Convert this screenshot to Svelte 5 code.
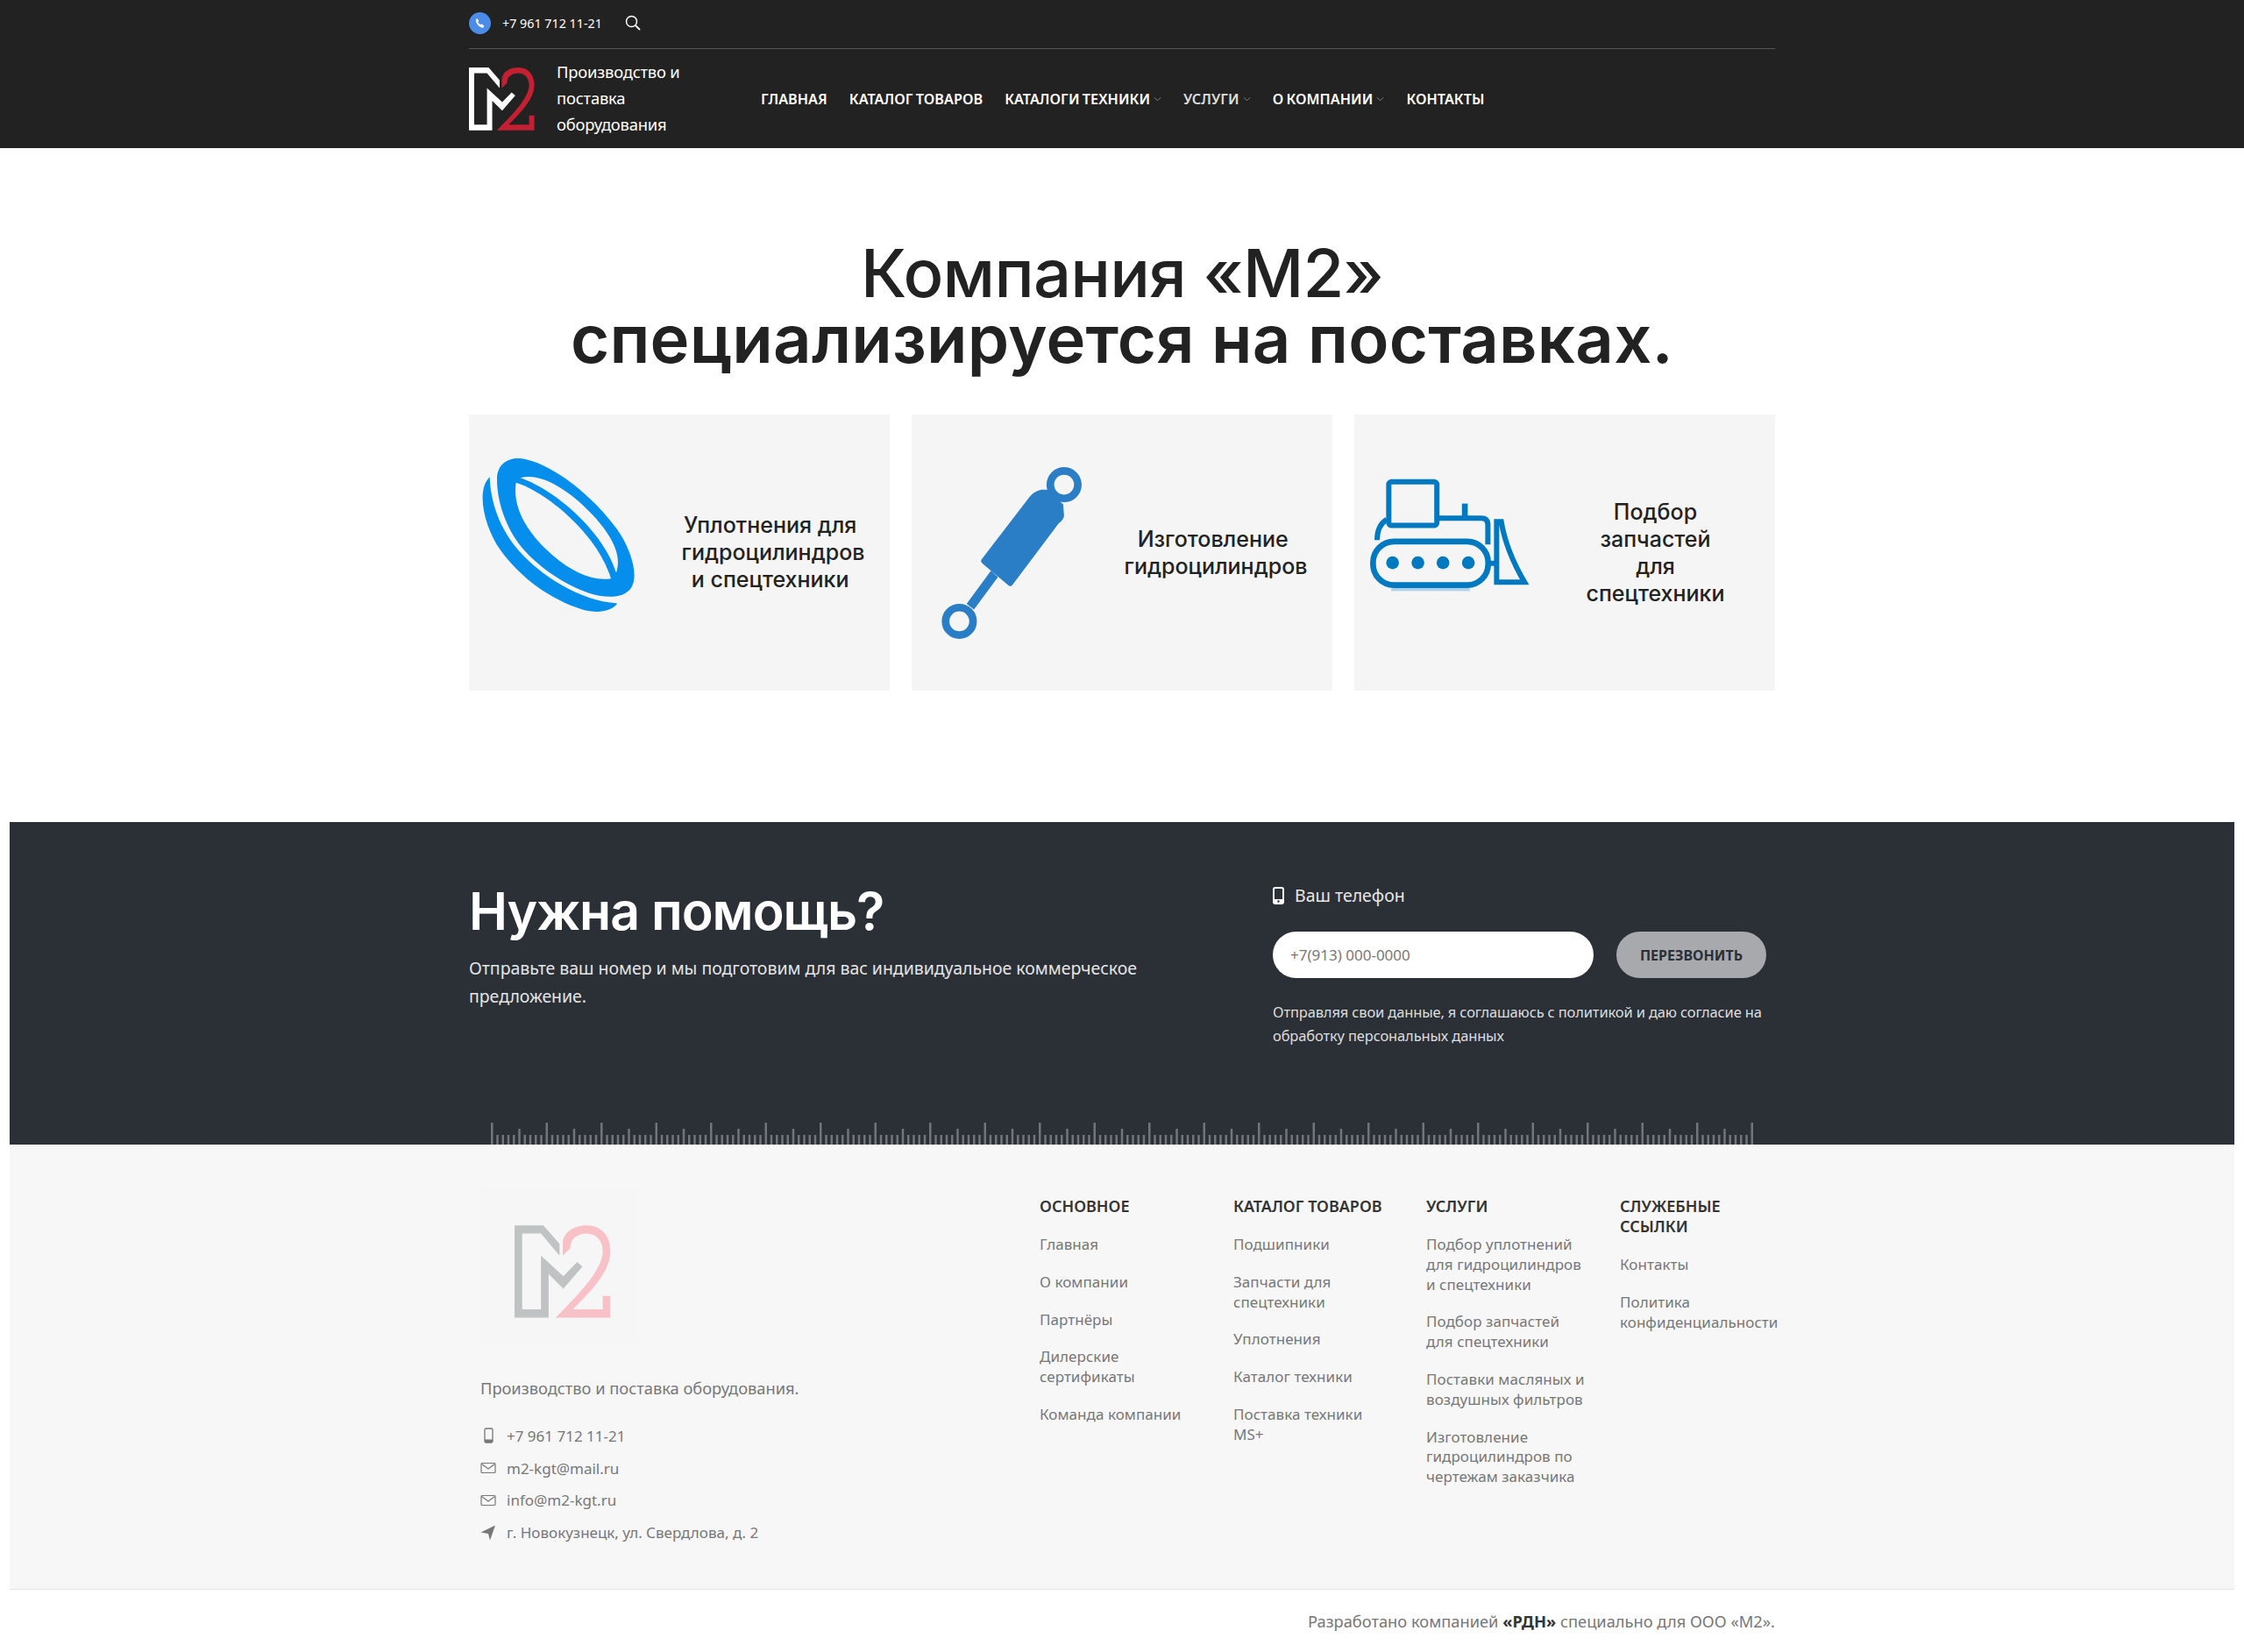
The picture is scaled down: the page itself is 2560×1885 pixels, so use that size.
<script>
  const nav = [
    { t: 'Главная' }, { t: 'Каталог товаров' }, { t: 'Каталоги техники', c: true },
    { t: 'Услуги', c: true, dim: true }, { t: 'О компании', c: true }, { t: 'Контакты' }
  ];
  const ticks = Array.from({ length: 231 }, (_, i) => ({
    x: i * 6.25 + 1,
    h: i % 10 === 0 ? 25 : i % 5 === 0 ? 18 : 11
  }));
  const cols = [
    { title: 'Основное', items: ['Главная', 'О компании', 'Партнёры', 'Дилерские\nсертификаты', 'Команда компании'] },
    { title: 'Каталог товаров', items: ['Подшипники', 'Запчасти для\nспецтехники', 'Уплотнения', 'Каталог техники', 'Поставка техники\nMS+'] },
    { title: 'Услуги', items: ['Подбор уплотнений\nдля гидроцилиндров\nи спецтехники', 'Подбор запчастей\nдля спецтехники', 'Поставки масляных и\nвоздушных фильтров', 'Изготовление\nгидроцилиндров по\nчертежам заказчика'] },
    { title: 'Служебные\nссылки', items: ['Контакты', 'Политика\nконфиденциальности'] }
  ];
  const mPath = 'M142 412H240L295 475V515L232 440H168V698H232V515L308 585L355 537L373 552L308 628L258 578V726H142Z';
  const twoPath = 'M306 515V470C310 430 350 412 388 412C440 412 468 450 468 500C468 560 420 620 340 698H442V652H468V726H282C340 665 442 570 442 500C442 465 420 440 388 440C355 440 330 460 332 490Z';
</script>

<header class="head">
  <div class="wrap">
    <div class="top">
      <span class="phone-dot">
        <svg viewBox="0 0 24 24" width="15" height="15"><path fill="#fff" d="M7 3l3 4.5-1.6 2.2c.9 2 2.6 4 4.6 5l2.2-1.6L20 17l-1.5 2.6c-.4.6-1.100.9-1.800.7C10.500 18.700 5.300 13.300 4.400 6.800 4.300 6.100 4.600 5.400 5.200 5z"/></svg>
      </span>
      <span class="top-phone">+7 961 712 11-21</span>
      <svg class="search" viewBox="0 0 18 18" width="18" height="18"><circle cx="7.500" cy="7.500" r="6" fill="none" stroke="#fff" stroke-width="1.500"/><path d="M12 12l5 5" stroke="#fff" stroke-width="1.800"/></svg>
    </div>
    <div class="main">
      <div class="brand">
        <svg class="logo" viewBox="142 412 328 315"><path d={mPath} fill="#fff"/><path d={twoPath} fill="#c32033"/></svg>
        <div class="tag">Производство и<br>поставка<br>оборудования</div>
      </div>
      <nav class="nav">
        {#each nav as n}
          <a href="#top" class:dim={n.dim}>{n.t}{#if n.c}<svg viewBox="0 0 10 6" width="9" height="6"><path d="M1 1l4 4 4-4" fill="none" stroke="#8a8a8a" stroke-width="1"/></svg>{/if}</a>
        {/each}
      </nav>
    </div>
  </div>
</header>

<section class="hero wrap">
  <h1>Компания «М2»<br><span>специализируется на поставках.</span></h1>
  <div class="cards">
    <div class="card">
      <div class="icon">
        <svg class="ring" viewBox="80 180 540 545">
          <path fill="#058eeb" d="M140 260C140 200 190 180 240 192C340 215 470 320 550 430C600 500 625 590 600 630C575 670 510 668 450 648C370 620 290 565 235 505C180 445 140 350 140 260Z"/>
          <path fill="#f5f5f5" d="M205 272C300 300 480 440 530 600C470 610 400 580 330 520C260 460 190 370 205 272Z"/>
          <path fill="#f5f5f5" d="M220 255C300 235 400 310 470 385C530 450 570 520 548 580C510 450 350 300 220 255Z"/>
          <path fill="#058eeb" d="M115 252C118 340 150 430 215 505C290 590 420 675 552 685C530 715 480 720 430 705C330 675 220 600 150 500C100 430 65 300 115 252Z"/>
        </svg>
      </div>
      <div class="ctext">Уплотнения для&nbsp;<br>гидроцилиндров<br>и спецтехники&nbsp;</div>
    </div>
    <div class="card">
      <div class="icon">
        <svg class="cyl" viewBox="120 200 500 620">
          <g fill="#2a7ec6">
            <path d="M265 535L430 320Q445 300 470 295L490 295L545 345L548 385Q545 400 530 410L372 620Q366 628 358 622L270 548Q262 542 265 535Z"/>
            <path d="M298 572L322 594L240 705L215 685Z"/>
          </g>
          <circle cx="548" cy="278" r="47" fill="none" stroke="#2a7ec6" stroke-width="26"/>
          <circle cx="190" cy="745" r="47" fill="none" stroke="#2a7ec6" stroke-width="26"/>
        </svg>
      </div>
      <div class="ctext">Изготовление&nbsp;<br>гидроцилиндров</div>
    </div>
    <div class="card">
      <div class="icon">
        <svg class="doz" viewBox="60 130 560 400">
          <g fill="none" stroke="#0079c1">
            <rect x="132" y="150" width="165" height="150" rx="10" stroke-width="18"/>
            <path d="M125 280C100 295 92 320 92 350" stroke-width="18"/>
            <path d="M300 275H450Q470 275 472 295V365" stroke-width="18"/>
            <path d="M393 225V275" stroke-width="20"/>
            <rect x="78" y="355" width="395" height="150" rx="72" stroke-width="20"/>
            <path d="M475 430H500" stroke-width="18"/>
            <path d="M502 287H518C530 360 560 430 598 495H502Z" stroke-width="18"/>
          </g>
          <g fill="#0079c1">
            <circle cx="145" cy="428" r="22"/><circle cx="232" cy="428" r="22"/><circle cx="318" cy="428" r="22"/><circle cx="405" cy="428" r="22"/>
          </g>
          <rect x="140" y="515" width="270" height="10" fill="#aed0e8"/>
        </svg>
      </div>
      <div class="ctext shift">Подбор<br>запчастей<br>для<br>спецтехники</div>
    </div>
  </div>
</section>

<section class="help">
  <div class="wrap help-in">
    <div class="help-l">
      <h2>Нужна помощь?</h2>
      <p>Отправьте ваш номер и мы подготовим для вас индивидуальное коммерческое предложение.</p>
    </div>
    <div class="help-r">
      <div class="lbl">
        <svg viewBox="0 0 13 20" width="13" height="20"><rect x="1" y="1" width="11" height="18" rx="2" fill="none" stroke="#fff" stroke-width="2"/><rect x="1" y="14" width="11" height="5" fill="#fff"/><circle cx="6.500" cy="16.500" r="1.200" fill="#2b2f36"/></svg>
        <span>Ваш телефон</span>
      </div>
      <div class="form">
        <input placeholder="+7(913) 000-0000" />
        <button>Перезвонить</button>
      </div>
      <div class="note">Отправляя свои данные, я соглашаюсь с политикой и даю согласие на обработку персональных данных</div>
    </div>
  </div>
  <svg class="ruler" width="1442" height="25" viewBox="0 0 1442 25">
    {#each ticks as t}<rect x={t.x} y={25 - t.h} width="2.500" height={t.h} fill="#72767b"/>{/each}
  </svg>
</section>

<footer class="foot">
  <div class="wrap foot-in">
    <div class="about">
      <div class="fbox">
        <svg class="flogo" viewBox="142 412 328 315"><path d={mPath} fill="#bfc3c4"/><path d={twoPath} fill="#f7c1c7"/></svg>
      </div>
      <div class="ftag">Производство и поставка оборудования.</div>
      <ul class="contacts">
        <li><svg viewBox="0 0 18 18" width="18" height="18"><rect x="5" y="1" width="9" height="16" rx="1.500" fill="none" stroke="#777" stroke-width="1.300"/><rect x="5" y="13.500" width="9" height="3.500" fill="#777"/></svg>+7 961 712 11-21</li>
        <li><svg viewBox="0 0 18 18" width="18" height="18"><rect x="1" y="3.500" width="16" height="11" rx="1" fill="none" stroke="#777" stroke-width="1.200"/><path d="M1.500 4.500L9 10l7.500-5.500" fill="none" stroke="#777" stroke-width="1.200"/></svg>m2-kgt@mail.ru</li>
        <li><svg viewBox="0 0 18 18" width="18" height="18"><rect x="1" y="3.500" width="16" height="11" rx="1" fill="none" stroke="#777" stroke-width="1.200"/><path d="M1.500 4.500L9 10l7.500-5.500" fill="none" stroke="#777" stroke-width="1.200"/></svg>info@m2-kgt.ru</li>
        <li><svg viewBox="0 0 18 18" width="18" height="18"><path d="M17 0.500L0.500 8.500L9 10L11 17.500Z" fill="#777"/></svg>г. Новокузнецк, ул. Свердлова, д. 2</li>
      </ul>
    </div>
    {#each cols as c}
      <div class="col">
        <h4>{c.title}</h4>
        {#each c.items as i}<a href="#top">{i}</a>{/each}
      </div>
    {/each}
  </div>
</footer>

<div class="bottom">
  <div class="wrap bottom-in">Разработано компанией&nbsp;<b>«РДН»</b>&nbsp;специально для ООО «М2».</div>
</div>

<style>
  :global(body) { margin: 0; background: #fff; font-family: "Noto Sans", "Open Sans", sans-serif; }
  .wrap { width: 1490px; margin: 0 auto; box-sizing: border-box; }
  a { text-decoration: none; color: inherit; }

  .head { background: #222; height: 169px; color: #fff; }
  .top { height: 56px; box-sizing: border-box; border-bottom: 1px solid #555; display: flex; align-items: center; padding-bottom: 3px; }
  .phone-dot { width: 25px; height: 25px; border-radius: 50%; background: #4a8ce6; display: flex; align-items: center; justify-content: center; }
  .top-phone { margin-left: 13px; font-size: 14.300px; }
  .search { margin-left: 26px; }
  .main { display: flex; align-items: center; height: 113px; }
  .brand { display: flex; align-items: center; width: 333px; }
  .logo { width: 75px; height: 72px; }
  .tag { margin: -2px 0 0 25px; font-size: 18.400px; line-height: 30px; letter-spacing: -0.200px; }
  .nav { display: flex; gap: 25px; font-size: 16.200px; font-weight: 600; text-transform: uppercase; letter-spacing: 0.050px; word-spacing: -1px; }
  .nav a { display: flex; align-items: center; gap: 4px; }
  .nav a.dim { color: #ddd; }

  .hero { padding-top: 105px; padding-bottom: 150px; }
  h1 { margin: 0 0 49px; text-align: center; font-family: Inter, sans-serif; font-size: 76px; line-height: 75px; font-weight: 500; color: #222; letter-spacing: -0.800px; }
  h1 span { font-weight: 600; letter-spacing: 0.200px; }
  .cards { display: grid; grid-template-columns: repeat(3, 480px); gap: 25px; }
  .card { height: 315px; background: #f5f5f5; display: grid; grid-template-columns: 232px 230px; align-items: center; }
  .icon { align-self: start; }
  .icon svg { display: block; }
  .ring { width: 180px; height: 182px; margin: 47px 0 0 12px; }
  .cyl { width: 167px; height: 207px; margin: 54px 0 0 31px; }
  .doz { width: 187px; height: 133px; margin: 70px 0 0 15px; }
  .ctext { text-align: center; font-family: Inter, sans-serif; font-size: 25px; line-height: 31px; font-weight: 500; color: #222; }
  .ctext.shift { margin-left: -7px; }

  .help { margin: 0 11px; height: 368px; background: #2b2f36; display: flex; flex-direction: column; justify-content: space-between; align-items: center; color: #fff; overflow: hidden; }
  .help-in { display: flex; }
  .help-l { width: 917px; padding-top: 68px; }
  h2 { margin: 0; font-family: Inter, sans-serif; font-size: 59px; line-height: 68px; font-weight: 600; letter-spacing: -1px; }
  .help-l p { margin: 15px 0 0; width: 800px; font-size: 19.500px; line-height: 32px; color: #e4e5e6; letter-spacing: -0.030px; }
  .help-r { width: 573px; padding-top: 70px; }
  .lbl { display: flex; align-items: center; gap: 12px; font-size: 19.500px; line-height: 28px; color: #e8e8e8; }
  .form { display: flex; gap: 26px; margin-top: 27px; }
  input { width: 366px; height: 53px; box-sizing: border-box; border: 0; border-radius: 27px; padding: 0 20px; font: 17px "Noto Sans", sans-serif; background: #fff; outline: none; }
  input::placeholder { color: #777; opacity: 1; }
  button { width: 171px; height: 53px; padding: 0; border: 0; border-radius: 27px; background: #a8a9ad; color: #2b2f36; font: 700 16px "Noto Sans", sans-serif; text-transform: uppercase; }
  .note { margin-top: 25px; width: 565px; font-size: 16.500px; line-height: 27px; color: #dcdddf; letter-spacing: -0.150px; }
  .ruler { display: block; flex: none; margin-left: -1px; }

  .foot { margin: 0 11px; background: #f7f7f7; border-bottom: 1px solid #e5e5e5; height: 508px; box-sizing: border-box; }
  .foot-in { display: grid; grid-template-columns: 651px 221px 220px 221px 177px; padding-top: 49px; }
  .fbox { margin-left: 12px; width: 188px; height: 175px; background: #f6f6f6; display: flex; align-items: flex-start; }
  .flogo { width: 110px; height: 106px; margin: 43px 0 0 40px; }
  .ftag { margin: 41px 0 0 13px; font-size: 18.300px; line-height: 26px; color: #777; }
  .contacts { list-style: none; margin: 23px 0 0 13px; padding: 0; color: #777; font-size: 17px; }
  .contacts li { display: flex; align-items: center; gap: 12px; height: 36.800px; }
  .col { padding-top: 10px; }
  .col h4 { margin: 0 0 21px; font-size: 18px; line-height: 23px; font-weight: 600; color: #333; text-transform: uppercase; white-space: pre-line; letter-spacing: 0; }
  .col a { display: block; margin-bottom: 20px; font-size: 17px; line-height: 22.800px; color: #777; white-space: pre-line; letter-spacing: 0.050px; }

  .bottom { height: 71px; }
  .bottom-in { height: 71px; display: flex; align-items: center; justify-content: flex-end; font-size: 18.300px; color: #777; }
  .bottom-in b { color: #333; }
</style>
